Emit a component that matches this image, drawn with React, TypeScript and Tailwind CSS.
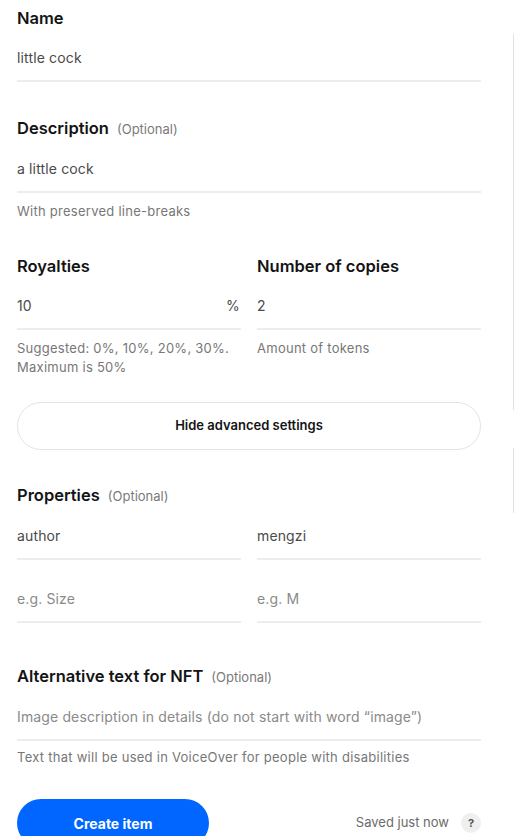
import type { ReactNode } from "react";

function Heading({ title, optional, className }: { title: string; optional?: boolean; className?: string }) {
  return (
    <div className={`flex items-baseline gap-2 leading-6 ${className ?? ""}`}>
      <span className="text-[16.5px] font-semibold text-[#141414]">{title}</span>
      {optional && <span className="text-[13px] text-[#7a7a7a]">(Optional)</span>}
    </div>
  );
}

function Field({ value, placeholder, suffix }: { value?: string; placeholder?: string; suffix?: string }) {
  return (
    <div className="flex items-center justify-between pt-[18px] pb-[12px] leading-5 border-b-2 border-[#ededed] text-[14px] tracking-[0.01em]">
      {value ? (
        <span className="text-[#4a4a4a]">{value}</span>
      ) : (
        <span className="text-[#8a8a8a]">{placeholder}</span>
      )}
      {suffix && <span className="text-[#4a4a4a] mr-[1px]">{suffix}</span>}
    </div>
  );
}

function Hint({ children, className }: { children: ReactNode; className?: string }) {
  return <p className={`text-[13px] leading-[19px] tracking-[0.02em] text-[#777] ${className ?? ""}`}>{children}</p>;
}

export default function App() {
  return (
    <div className="flex justify-between bg-white font-['Inter',sans-serif]">
      <main className="ml-[17px] w-[464px] pt-[6px]">
        <Heading title="Name" />
        <Field value="little cock" />

        <Heading title="Description" optional className="mt-[34px]" />
        <Field value="a little cock" />
        <Hint className="mt-[9px]">With preserved line-breaks</Hint>

        <section className="grid grid-cols-2 gap-4 mt-[33px]">
          <div>
            <Heading title="Royalties" />
            <Field value="10" suffix="%" />
            <Hint className="mt-[9px]">
              Suggested: 0%, 10%, 20%, 30%.
              <br />
              Maximum is 50%
            </Hint>
          </div>
          <div>
            <Heading title="Number of copies" />
            <Field value="2" />
            <Hint className="mt-[9px]">Amount of tokens</Hint>
          </div>
        </section>

        <button className="mt-[25px] h-12 w-full rounded-full border border-[#e4e4e4] text-[13px] font-semibold text-[#141414]">
          Hide advanced settings
        </button>

        <Heading title="Properties" optional className="mt-[33px]" />
        <div className="grid grid-cols-2 gap-x-4">
          <Field value="author" />
          <Field value="mengzi" />
        </div>
        <div className="grid grid-cols-2 gap-x-4 mt-[11px]">
          <Field placeholder="e.g. Size" />
          <Field placeholder="e.g. M" />
        </div>

        <Heading title="Alternative text for NFT" optional className="mt-[41px]" />
        <Field placeholder="Image description in details (do not start with word “image”)" />
        <Hint className="mt-[7px]">Text that will be used in VoiceOver for people with disabilities</Hint>

        <div className="flex items-center justify-between mt-[32px] pb-6">
          <button className="h-12 w-[192px] rounded-full bg-[#0066ff] text-[14px] font-bold text-white">
            Create item
          </button>
          <div className="flex items-center gap-3">
            <span className="text-[13px] text-[#6b6b6b]">Saved just now</span>
            <span className="flex h-5 w-5 items-center justify-center rounded-full bg-[#efefef] text-[11px] font-bold text-[#555]">
              ?
            </span>
          </div>
        </div>
      </main>
      <aside className="w-px">
        <div className="mt-[34px] h-[376px] bg-[#e2e2e2]" />
        <div className="mt-[38px] h-[65px] bg-[#e2e2e2]" />
      </aside>
    </div>
  );
}
